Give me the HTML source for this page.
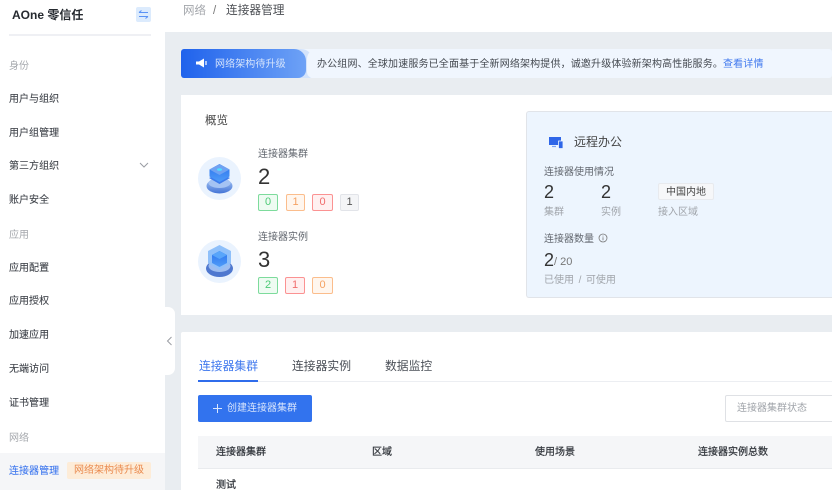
<!DOCTYPE html>
<html lang="zh"><head><meta charset="utf-8"><style>
html,body{margin:0;padding:0;width:832px;height:490px;overflow:hidden;background:#e9edf1;font-family:"Liberation Sans","Noto Sans CJK SC",sans-serif;color:#333}
#w{position:absolute;left:0;top:0;width:832px;height:490px;overflow:hidden;filter:blur(.3px)}
.a{position:absolute;white-space:nowrap}
.abs{position:absolute}
.m{font-size:10px;left:9px;color:#3f434a;line-height:14px;margin-top:2px;letter-spacing:.03px;-webkit-text-stroke:.1px currentColor}
.g{font-size:10px;left:9px;color:#a5a8ad;line-height:14px;margin-top:2px}
.tag{position:absolute;height:17px;line-height:15px;box-sizing:border-box;border-radius:2px;font-size:11px;text-align:center;border:1.3px solid}
.gr{border-color:#7ddb9c;background:#eefbf2;color:#4ccb76}
.or{border-color:#fbbd8c;background:#fff6ee;color:#f5a263}
.re{border-color:#fb9292;background:#fff0f0;color:#f06c6c}
.gy{border-color:#e2e4e9;background:#f4f5f7;color:#555}
.l{font-size:10px;color:#62676f;line-height:14px;margin-top:2px}
.s{font-size:10px;color:#a0a4aa;line-height:14px;margin-top:2px}
.t{font-size:10px;line-height:14px;color:#34383e;margin-top:1px;-webkit-text-stroke:.25px currentColor}
</style></head><body><div id="w">
<div class="abs" style="left:0;top:0;width:165px;height:490px;background:#fff"></div>
<div class="a" style="left:12px;top:7px;font-size:12px;font-weight:bold;color:#262a30;line-height:16px">AOne 零信任</div>
<div class="abs" style="left:136px;top:7px;width:15px;height:15px;background:#dcebfd;border-radius:2px"></div>
<svg class="abs" style="left:136px;top:7px" width="15" height="15" viewBox="0 0 15 15"><path d="M3 5.5H12M3 5.5L5.5 3.5M12 9.5H3M12 9.5L9.5 11.5" fill="none" stroke="#5b93f5" stroke-width="1.1"/></svg>
<div class="abs" style="left:9px;top:34px;width:142px;height:2px;background:#eff0f4"></div>
<div class="a g" style="top:58px">身份</div>
<div class="a m" style="top:91px">用户与组织</div>
<div class="a m" style="top:125px">用户组管理</div>
<div class="a m" style="top:158px">第三方组织</div>
<svg class="abs" style="left:139px;top:160px" width="10" height="10" viewBox="0 0 10 10"><path d="M1 3L5 7L9 3" fill="none" stroke="#9a9da3" stroke-width="1"/></svg>
<div class="a m" style="top:192px">账户安全</div>
<div class="a g" style="top:227px">应用</div>
<div class="a m" style="top:260px">应用配置</div>
<div class="a m" style="top:293px">应用授权</div>
<div class="a m" style="top:327px">加速应用</div>
<div class="a m" style="top:361px">无端访问</div>
<div class="a m" style="top:395px">证书管理</div>
<div class="a g" style="top:430px">网络</div>
<div class="abs" style="left:0;top:453px;width:165px;height:37px;background:#f5f6f8"></div>
<div class="a m" style="top:463px;color:#3f78ee">连接器管理</div>
<div class="a" style="left:67px;top:462px;width:84px;height:17px;background:#fdecd8;border-radius:2px;color:#ea8a4e;font-size:10px;line-height:17px;text-align:center">网络架构待升级</div>
<div class="abs" style="left:165px;top:307px;width:10px;height:68px;background:#fff;border-radius:0 7px 7px 0"></div>
<svg class="abs" style="left:165px;top:335px" width="10" height="12" viewBox="0 0 10 12"><path d="M6.5 2L2.5 6L6.5 10" fill="none" stroke="#9a9da3" stroke-width="1"/></svg>

<div class="abs" style="left:165px;top:0;width:667px;height:32px;background:#fff"></div>
<div class="a" style="left:183px;top:3px;font-size:11.5px;line-height:16px;color:#a3a6ab">网络</div>
<div class="a" style="left:213px;top:3px;font-size:11.5px;line-height:16px;color:#777">/</div>
<div class="a" style="left:226px;top:3px;font-size:11.7px;line-height:16px;color:#4a4d52">连接器管理</div>

<div class="abs" style="left:181px;top:49px;width:651px;height:29px;background:#f0f6fe;border-radius:3px"></div>
<div class="abs" style="left:181px;top:49px;width:132px;height:29px;background:#d3e3fb;border-radius:3px 12px 3px 3px"></div>
<div class="abs" style="left:181px;top:49px;width:125px;height:29px;background:linear-gradient(90deg,#1f62ec,#6ea2f6);border-radius:3px 12px 8px 3px"></div>
<div class="abs" style="left:307px;top:49px;width:30px;height:29px;background:#f0f6fe;border-radius:10px 0 0 6px"></div>
<svg class="abs" style="left:195px;top:57px" width="14" height="13" viewBox="0 0 14 13"><path d="M1 4.5H4L9 1.5V10.5L4 7.5H1Z" fill="#fff"/><path d="M11 4V8" stroke="#fff" stroke-width="1.2"/></svg>
<div class="a" style="left:215px;top:58px;font-size:10px;line-height:14px;color:#d5e4fc;letter-spacing:.1px">网络架构待升级</div>
<div class="a" style="left:317px;top:58px;font-size:10px;line-height:14px;color:#444950;letter-spacing:.15px">办公组网、全球加速服务已全面基于全新网络架构提供，诚邀升级体验新架构高性能服务。<span style="color:#3f78ee">查看详情</span></div>

<div class="abs" style="left:181px;top:95px;width:651px;height:220px;background:#fff"></div>
<div class="a" style="left:205px;top:113px;font-size:11.5px;line-height:16px;color:#444">概览</div>

<div class="abs" style="left:198px;top:157px;width:43px;height:43px;border-radius:50%;background:#eaf3fe"></div>
<svg class="abs" style="left:198px;top:157px" width="43" height="43" viewBox="0 0 43 43">
<defs><linearGradient id="c1" x1="0" y1="0" x2="0" y2="1"><stop offset="0" stop-color="#2a72ee"/><stop offset="1" stop-color="#4f9cf8"/></linearGradient>
<linearGradient id="d1" x1="0" y1="0" x2="0" y2="1"><stop offset="0" stop-color="#a9c8f5"/><stop offset="1" stop-color="#4474d6"/></linearGradient></defs>
<ellipse cx="21.5" cy="29" rx="13" ry="7.5" fill="url(#d1)"/><ellipse cx="21.5" cy="26" rx="11" ry="5" fill="#a5c3f3"/>
<path d="M21.5 16L32 21L21.5 27L11 21Z" fill="#3e7cec"/>
<path d="M21.5 7L31.5 12.5V19.5L21.5 25L11.5 19.5V12.5Z" fill="url(#c1)"/><path d="M21.5 7L31.5 12.5L21.5 18L11.5 12.5Z" fill="#6fa2f2"/><ellipse cx="21.5" cy="12.5" rx="2.5" ry="1.3" fill="#4fe0ff"/></svg>
<div class="a l" style="left:258px;top:146px">连接器集群</div>
<div class="a" style="left:258px;top:163px;font-size:22px;line-height:28px;color:#333">2</div>
<div class="tag gr" style="left:258px;top:194px;width:20px">0</div>
<div class="tag or" style="left:286px;top:194px;width:19px">1</div>
<div class="tag re" style="left:312px;top:194px;width:21px">0</div>
<div class="tag gy" style="left:340px;top:194px;width:19px">1</div>

<div class="abs" style="left:198px;top:240px;width:43px;height:43px;border-radius:50%;background:#eaf3fe"></div>
<svg class="abs" style="left:198px;top:240px" width="43" height="43" viewBox="0 0 43 43">
<ellipse cx="21.5" cy="28.5" rx="13.5" ry="8.5" fill="#4f78cf"/><ellipse cx="21.5" cy="26" rx="11" ry="6" fill="#9dbdf0"/>
<path d="M21.5 5L33 11V23L21.5 30L10 23V11Z" fill="#8fc0fa"/>
<path d="M21.5 11L29 15V23L21.5 27L14 23V15Z" fill="url(#c1)"/><path d="M21.5 11L29 15L21.5 19L14 15Z" fill="#58a5fa"/></svg>
<div class="a l" style="left:258px;top:229px">连接器实例</div>
<div class="a" style="left:258px;top:246px;font-size:22px;line-height:28px;color:#333">3</div>
<div class="tag gr" style="left:258px;top:277px;width:20px">2</div>
<div class="tag re" style="left:285px;top:277px;width:20px">1</div>
<div class="tag or" style="left:312px;top:277px;width:21px">0</div>

<div class="abs" style="left:526px;top:111px;width:306px;height:187px;box-sizing:border-box;background:#edf5fe;border:1.5px solid #e1e4e9;border-right:0;border-radius:3px 0 0 3px"></div>
<svg class="abs" style="left:548px;top:136px" width="16" height="14" viewBox="0 0 16 14"><path d="M1 1H13V9H1Z" fill="#2f66e8"/><path d="M4 10.5H8" stroke="#7fa4f2" stroke-width="1.2"/><path d="M10.5 5H15V12.5H10.5Z" fill="#2f66e8" stroke="#edf5fe" stroke-width=".8"/></svg>
<div class="a" style="left:574px;top:134px;font-size:12px;line-height:16px;color:#444">远程办公</div>
<div class="a l" style="left:544px;top:164px">连接器使用情况</div>
<div class="a" style="left:544px;top:181px;font-size:18px;line-height:22px;color:#333">2</div>
<div class="a" style="left:601px;top:181px;font-size:18px;line-height:22px;color:#333">2</div>
<div class="a" style="left:658px;top:183px;width:56px;height:17px;box-sizing:border-box;background:#f6f7f9;border:1px solid #e8eaee;border-radius:2px;font-size:10px;line-height:17px;text-align:center;color:#444">中国内地</div>
<div class="a s" style="left:544px;top:204px">集群</div>
<div class="a s" style="left:601px;top:204px">实例</div>
<div class="a s" style="left:658px;top:204px">接入区域</div>
<div class="a l" style="left:544px;top:231px">连接器数量</div>
<svg class="abs" style="left:598px;top:233px" width="10" height="10" viewBox="0 0 10 10"><circle cx="5" cy="5" r="4" fill="none" stroke="#777" stroke-width=".8"/><path d="M5 4.3V7.3M5 2.6V3.5" stroke="#777" stroke-width=".8"/></svg>
<div class="a" style="left:544px;top:249px;font-size:18px;line-height:22px;color:#333">2</div>
<div class="a" style="left:554px;top:255px;font-size:11px;line-height:14px;color:#777">/ 20</div>
<div class="a s" style="left:544px;top:272px;word-spacing:1.8px">已使用 / 可使用</div>

<div class="abs" style="left:181px;top:332px;width:651px;height:158px;background:#fff;border-radius:2px 0 0 0"></div>
<div class="a" style="left:199px;top:358px;font-size:11.8px;line-height:16px;color:#3f78ee">连接器集群</div>
<div class="a" style="left:292px;top:358px;font-size:11.8px;line-height:16px;color:#4a4f57">连接器实例</div>
<div class="a" style="left:385px;top:358px;font-size:11.8px;line-height:16px;color:#4a4f57">数据监控</div>
<div class="abs" style="left:198px;top:381px;width:634px;height:1px;background:#eceef2"></div>
<div class="abs" style="left:198px;top:380px;width:60px;height:2px;background:#2f6ceb"></div>
<div class="abs" style="left:198px;top:395px;width:114px;height:27px;background:#3273ee;border-radius:2px"></div>
<svg class="abs" style="left:212px;top:403px" width="11" height="11" viewBox="0 0 11 11"><path d="M5.5 1V10M1 5.5H10" stroke="#d8e5fc" stroke-width="1"/></svg>
<div class="a" style="left:227px;top:402px;font-size:10px;line-height:14px;color:#d8e5fc">创建连接器集群</div>
<div class="abs" style="left:725px;top:395px;width:120px;height:27px;box-sizing:border-box;border:1px solid #dfe1e5;border-radius:2px;background:#fff"></div>
<div class="a" style="left:737px;top:402px;font-size:10px;line-height:14px;color:#a0a4aa">连接器集群状态</div>
<div class="abs" style="left:198px;top:436px;width:634px;height:33px;background:#f5f6f8;border-bottom:1px solid #e9ebee;box-sizing:border-box"></div>
<div class="a t" style="left:216px;top:445px">连接器集群</div>
<div class="a t" style="left:372px;top:445px">区域</div>
<div class="a t" style="left:535px;top:445px">使用场景</div>
<div class="a t" style="left:698px;top:445px">连接器实例总数</div>
<div class="a t" style="left:216px;top:478px">测试</div>
</div></body></html>
